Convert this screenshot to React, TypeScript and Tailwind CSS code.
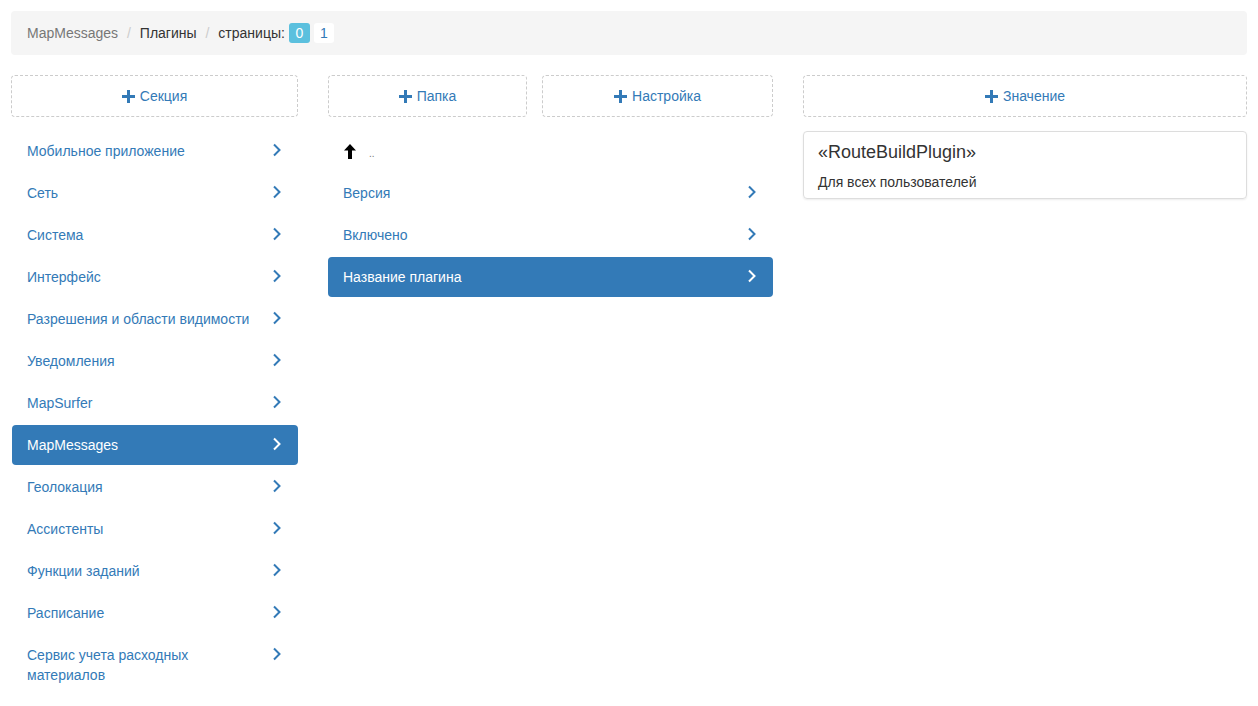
import type { ReactNode } from "react";

const sections = [
  "Мобильное приложение",
  "Сеть",
  "Система",
  "Интерфейс",
  "Разрешения и области видимости",
  "Уведомления",
  "MapSurfer",
  "MapMessages",
  "Геолокация",
  "Ассистенты",
  "Функции заданий",
  "Расписание",
  "Сервис учета расходных материалов",
];

const settings = ["Версия", "Включено", "Название плагина"];

function Plus() {
  return (
    <svg width="13" height="13" viewBox="0 0 13 13" className="shrink-0">
      <path d="M5 0h3v5h5v3H8v5H5V8H0V5h5z" fill="currentColor" />
    </svg>
  );
}

function Chevron() {
  return (
    <svg width="10" height="14" viewBox="0 0 10 14" className="shrink-0">
      <path d="M2 1.5l5.5 5.5L2 12.5" fill="none" stroke="currentColor" strokeWidth="2" />
    </svg>
  );
}

function AddButton({ label, className = "" }: { label: string; className?: string }) {
  return (
    <button
      className={`flex h-[42px] items-center justify-center gap-[5px] rounded-[4px] border border-dashed border-[#ccc] pt-[1px] text-[14px] text-[#337ab7] ${className}`}
    >
      <Plus />
      <span>{label}</span>
    </button>
  );
}

function Row({ children, active, first }: { children: ReactNode; active?: boolean; first?: boolean }) {
  return (
    <div
      className={`mb-[2px] flex items-start rounded-[4px] py-[10px] pl-[15px] pr-[16px] text-[14px] leading-[20px] ${
        active ? "bg-[#337ab7] text-white" : "text-[#337ab7]"
      } ${first ? "ml-[1px]" : ""}`}
    >
      <span className="flex-1 pr-[8px]">{children}</span>
      <span className="pt-[2px]">
        <Chevron />
      </span>
    </div>
  );
}

function Sep() {
  return <span className="ml-[4px] px-[5px] text-[#ccc]">/&nbsp;</span>;
}

export default function App() {
  return (
    <div className="min-h-[706px] bg-white p-[11px] font-['Liberation_Sans',Arial,sans-serif] text-[14px] text-[#333]">
      <div className="flex h-[44px] items-center rounded-[4px] bg-[#f5f5f5] px-[16px] leading-[20px]">
        <span className="text-[#777]">MapMessages</span>
        <Sep />
        <span>Плагины</span>
        <Sep />
        <span>страницы:</span>
        <span className="ml-[4px] flex h-[20px] w-[21px] items-center justify-center rounded-[3px] bg-[#5bc0de] text-white">
          0
        </span>
        <span className="ml-[4px] flex h-[20px] w-[20px] items-center justify-center rounded-[3px] bg-white text-[#337ab7]">
          1
        </span>
      </div>

      <div className="mt-[20px] grid grid-cols-[287px_445px_444px] gap-[30px]">
        <div>
          <AddButton label="Секция" className="w-full" />
          <div className="mt-[14px]">
            {sections.map((s) => (
              <Row key={s} active={s === "MapMessages"} first>
                {s}
              </Row>
            ))}
          </div>
        </div>

        <div>
          <div className="flex gap-[15px]">
            <AddButton label="Папка" className="w-[199px]" />
            <AddButton label="Настройка" className="flex-1" />
          </div>
          <div className="mt-[14px]">
            <div className="mb-[2px] flex h-[40px] items-center pl-[16px]">
              <svg width="12" height="15" viewBox="0 0 12 15">
                <path d="M6 0L12 6.5H8V15H4V6.5H0z" fill="#000" />
              </svg>
              <span className="ml-[13px] mt-[6px] text-[10px] leading-[10px] text-[#777]">..</span>
            </div>
            {settings.map((s) => (
              <Row key={s} active={s === "Название плагина"}>
                {s}
              </Row>
            ))}
          </div>
        </div>

        <div>
          <AddButton label="Значение" className="w-full" />
          <div className="mt-[14px] rounded-[4px] border border-[#ddd] px-[14px] pb-[6px] pt-[10px] shadow-[0_1px_2px_rgba(0,0,0,0.08)]">
            <div className="text-[18px] leading-[20px] text-[#333]">«RouteBuildPlugin»</div>
            <div className="mt-[10px] leading-[20px] text-[#333]">Для всех пользователей</div>
          </div>
        </div>
      </div>
    </div>
  );
}
